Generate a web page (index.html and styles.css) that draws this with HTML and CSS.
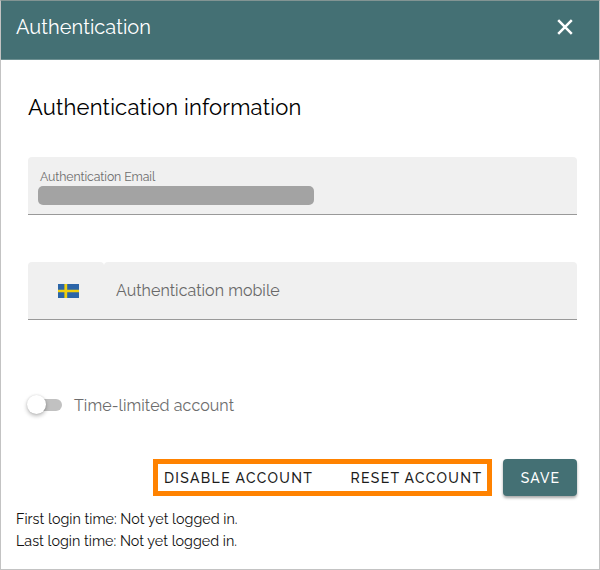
FILE: index.html
```html
<!DOCTYPE html>
<html lang="en">
<head>
<meta charset="utf-8">
<title>Authentication</title>
<link rel="stylesheet" href="styles.css">
</head>
<body>
<main class="dialog">
  <header class="bar">
    <span class="bar-title">Authentication</span>
    <svg class="close" viewBox="0 0 16 16"><path d="M1.2 1.2 14.8 14.8M14.8 1.2 1.2 14.8"/></svg>
  </header>
  <section class="content">
    <h1 class="heading">Authentication information</h1>
    <div class="field email">
      <span class="field-label">Authentication Email</span>
      <span class="redacted"></span>
    </div>
    <div class="phone">
      <div class="field country">
        <svg class="flag" viewBox="0 0 21 14"><path fill="#2b65a8" d="M0 0h21v14H0z"/><path fill="#f0cf10" d="M6.4 0h2.8v5.7H21v2.6H9.2V14H6.4V8.3H0V5.7h6.4z"/></svg>
      </div>
      <div class="field mobile"><span class="placeholder">Authentication mobile</span></div>
    </div>
    <div class="limit">
      <span class="switch"><span class="thumb"></span></span>
      <span class="limit-label">Time-limited account</span>
    </div>
  </section>
  <div class="actions">
    <div class="highlight">
      <span class="action disable">DISABLE ACCOUNT</span>
      <span class="action reset">RESET ACCOUNT</span>
    </div>
    <div class="save"><span class="save-label">SAVE</span></div>
  </div>
  <footer class="logins">
    <div><span class="first">First login time: Not yet logged in.</span></div>
    <div><span class="last">Last login time: Not yet logged in.</span></div>
  </footer>
</main>
</body>
</html>
```
FILE: styles.css
```css
* { box-sizing: border-box; }
body { margin: 0; font-family: Raleway, Lato, sans-serif; color: #1c1c1c; background: #fff; }
.dialog { width: 600px; height: 570px; border: 1px solid #c3c3c3; border-top-color: #829493; white-space: nowrap; }
.bar { height: 59px; padding: 0 26px 6px 15px; display: flex; align-items: center; justify-content: space-between; background: #447074; border-bottom: 1px solid #6e9092; color: #fff; }
.bar-title { font-size: 20px; letter-spacing: 0.05px; }
.close { width: 16px; height: 16px; fill: none; stroke: #fff; stroke-width: 2.5; }
.content { padding: 33px 22px 0 27px; }
.heading { margin: 0; height: 28px; line-height: 28px; font-size: 22px; font-weight: 400; letter-spacing: 0.18px; color: #000; }
.field { height: 58px; background: #f0f0f0; border-bottom: 1px solid #999; border-radius: 4px 4px 0 0; }
.email { margin-top: 36px; padding: 11px 10px 0; display: flex; flex-direction: column; align-items: flex-start; }
.field-label { height: 18px; line-height: 18px; margin-left: 2px; font-size: 12.3px; letter-spacing: -0.1px; color: #6d6d6d; }
.redacted { width: 276px; height: 18.5px; border-radius: 5px; background: #a3a3a3; }
.phone { margin-top: 47px; display: flex; }
.country { width: 76px; padding: 21.5px 0 0 29.5px; }
.flag { display: block; width: 21px; height: 14px; }
.mobile { flex: 1; padding: 0 12px; display: flex; align-items: center; }
.placeholder { font-size: 16px; letter-spacing: 0.04px; color: #696969; }
.limit { margin-top: 73px; height: 24px; display: flex; align-items: center; }
.switch { width: 34px; height: 12px; border-radius: 6px; background: #c1c1c1; }
.thumb { display: block; width: 19px; height: 19px; margin: -4px 0 0 -1px; border-radius: 50%; background: #fff; box-shadow: 0 2px 4px rgba(0,0,0,.28), 0 0 2px rgba(0,0,0,.12); }
.limit-label { margin-left: 12px; font-size: 16px; letter-spacing: 0.08px; color: #6d6d6d; }
.actions { margin-top: 42px; padding-right: 22px; display: flex; justify-content: flex-end; gap: 11px; }
.highlight { width: 339px; height: 37px; border: 5px solid #ff8200; padding: 1px 6px 0 6px; display: flex; align-items: center; justify-content: space-between; }
.action { font-size: 14px; font-weight: 500; letter-spacing: 1.35px; margin-right: -1.35px; }
.save { width: 74px; height: 37px; padding-top: 1px; border-radius: 4px; background: #447074; color: #fff; display: flex; align-items: center; justify-content: center; box-shadow: 0 2px 3px rgba(0,0,0,.35); }
.save-label { font-size: 14px; font-weight: 500; letter-spacing: 1.1px; margin-right: -1px; }
.logins { margin: 12px 0 0 15px; font-size: 14.3px; line-height: 22px; letter-spacing: 0.02px; color: #111; }
```
